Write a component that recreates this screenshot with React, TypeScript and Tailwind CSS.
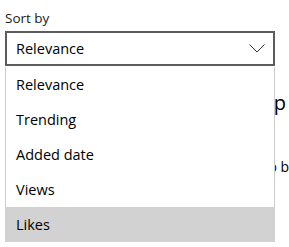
const options = ["Relevance", "Trending", "Added date", "Views", "Likes"]

export default function App() {
  const selected = "Likes"

  return (
    <div
      className="relative w-[289px] h-[247px] overflow-hidden bg-white pl-[5px] pt-[8px] text-black"
      style={{ fontFamily: '"Segoe UI", "Open Sans", sans-serif' }}
    >
      <label className="block text-[13.5px] leading-[20px] mb-[3px] text-[#1a1a1a]">Sort by</label>

      <div className="relative w-[270px]">
        <button className="flex items-center justify-between w-full h-[35px] border-2 border-[#5c5c5c] pl-[9px] pr-[8px] text-[14.5px]">
          <span>Relevance</span>
          <svg width="16" height="9" viewBox="0 0 16 9">
            <path d="M0.5 0.5 L8 8 L15.5 0.5" fill="none" stroke="#333" strokeWidth="1" />
          </svg>
        </button>

        <ul className="absolute left-0 right-0 top-[36px] z-10 bg-white border-x border-[#cccccc]">
          {options.map((o) => (
            <li
              key={o}
              className={`h-[35px] flex items-center text-[14.5px] ${o === selected ? "bg-[#d2d2d2] -mx-px pl-[11px]" : "pl-[10px]"}`}
            >
              {o}
            </li>
          ))}
        </ul>
      </div>

      <div className="w-[284px]">
        <h2 className="mt-[23px] text-right text-[20px] leading-[28px] whitespace-nowrap pr-[3px]">Desktop</h2>
        <p className="mt-[40px] text-right text-[14px] leading-[20px] whitespace-nowrap">Sign in to b</p>
      </div>
    </div>
  )
}
